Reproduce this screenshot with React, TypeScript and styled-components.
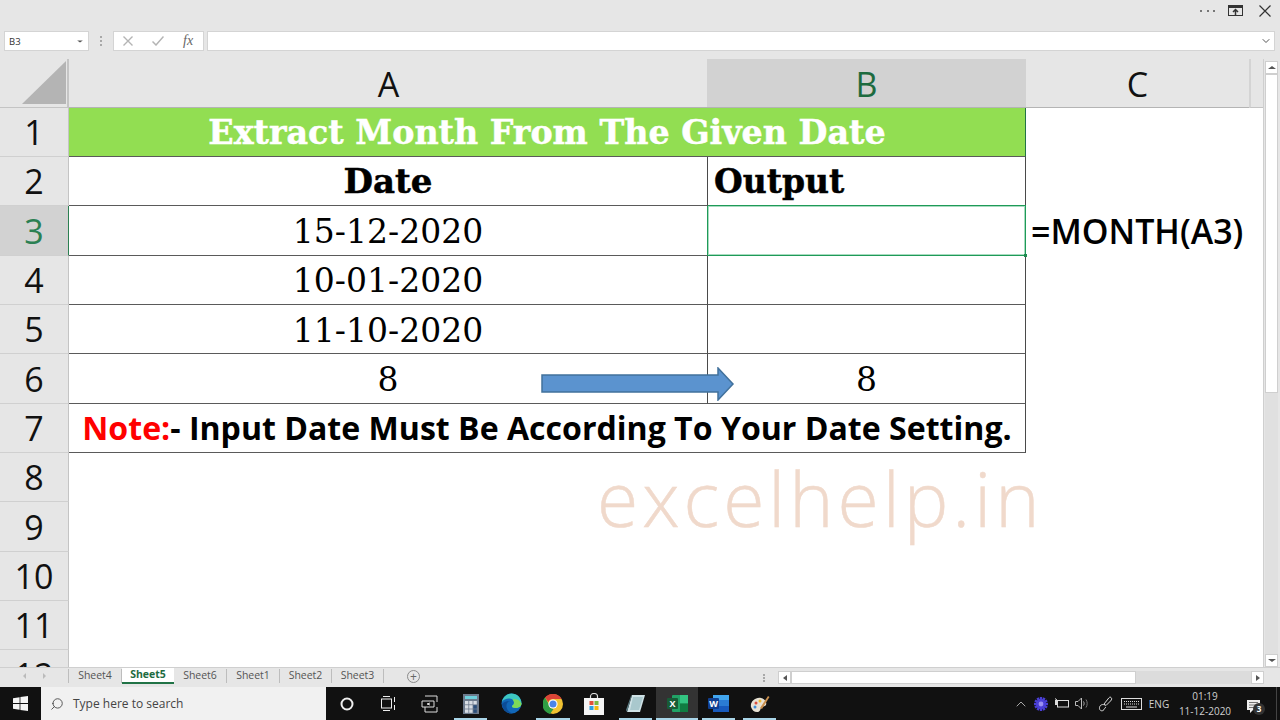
import React from "react";
import styled, { createGlobalStyle } from "styled-components";
import { ChevronDown, ChevronUp, Search } from "lucide-react";

const GlobalStyle = createGlobalStyle`
  html, body {
    margin: 0;
    padding: 0;
    background: #e6e6e6;
    overflow: hidden;
  }
  * { box-sizing: border-box; }
`;

const Page = styled.div`
  width: 1280px;
  height: 720px;
  display: flex;
  flex-direction: column;
  background: #e6e6e6;
  font-family: "Open Sans", "Noto Sans", sans-serif;
  color: #000;
`;

/* window controls */
const TitleBar = styled.div`
  height: 31px;
  padding: 5px 9px 0 0;
  display: flex;
  justify-content: flex-end;
  align-items: flex-start;
  gap: 16px;
  color: #333;
`;

const MoreDots = styled.div`
  width: 15px;
  height: 11px;
  margin-right: -3px;
  display: flex;
  align-items: center;
  justify-content: space-between;
  & > i {
    width: 2px;
    height: 2px;
    background: #777;
  }
`;

/* formula bar */
const FormulaRow = styled.div`
  height: 20px;
  margin: 0 5px 8px 4px;
  display: flex;
  align-items: stretch;
`;

const NameBox = styled.div`
  width: 85px;
  background: #fff;
  border: 1px solid #d4d4d4;
  padding: 0 4px;
  font-size: 9.5px;
  color: #333;
  display: flex;
  align-items: center;
  justify-content: space-between;
`;

const Grip = styled.div`
  width: 24px;
  display: flex;
  flex-direction: column;
  align-items: center;
  justify-content: center;
  gap: 2px;
  & > i {
    width: 2px;
    height: 2px;
    background: #a8a8a8;
  }
`;

const FxBox = styled.div`
  width: 91px;
  margin-right: 3px;
  background: #fff;
  border: 1px solid #d4d4d4;
  display: flex;
  align-items: center;
  padding-left: 9px;
  gap: 19px;
  color: #b4b4b4;
`;

const FxLabel = styled.span`
  font-family: "Liberation Serif", serif;
  font-style: italic;
  font-size: 14px;
  color: #666;
`;

const FormulaInput = styled.div`
  flex: 1;
  background: #fff;
  border: 1px solid #d4d4d4;
  display: flex;
  align-items: center;
  justify-content: flex-end;
  padding-right: 2px;
  color: #555;
`;

/* sheet */
const SheetArea = styled.div`
  position: relative;
  height: 608px;
  display: flex;
  overflow: hidden;
`;

const SheetGrid = styled.div`
  width: 1264px;
  border-right: 1px solid #cfcfcf;
  display: grid;
  grid-template-columns: 69px 639px 318px 223px 14px;
  grid-template-rows: 48.8px;
  grid-auto-rows: 49.33px;
  align-content: start;
`;

const Corner = styled.div`
  display: flex;
  align-items: flex-end;
  justify-content: flex-end;
  padding: 0 1px 3px 0;
  border-right: 2px solid #c4c4c4;
  border-bottom: 1px solid #c4c4c4;
`;

const ColHead = styled.div<{ $active?: boolean }>`
  display: flex;
  align-items: center;
  justify-content: center;
  padding-top: 2px;
  margin-left: ${(p) => (p.$active ? "-1px" : "0")};
  font-size: 34px;
  background: ${(p) => (p.$active ? "#d2d2d2" : "#e6e6e6")};
  color: ${(p) => (p.$active ? "#1d6b3f" : "#111")};
  border-bottom: 1px solid #b4b4b4;
`;

const ColEnd = styled.div`
  border-left: 2px solid #d4d4d4;
  border-bottom: 1px solid #c4c4c4;
`;

const RowHead = styled.div<{ $active?: boolean }>`
  display: flex;
  align-items: center;
  justify-content: center;
  font-size: 34px;
  background: ${(p) => (p.$active ? "#d2d2d2" : "#e6e6e6")};
  color: ${(p) => (p.$active ? "#2b8052" : "#111")};
  border-right: 1px solid ${(p) => (p.$active ? "#2b8052" : "#c4c4c4")};
  border-bottom: 1px solid #d0d0d0;
`;

const Cell = styled.div<{ $selected?: boolean }>`
  position: relative;
  display: flex;
  align-items: center;
  justify-content: center;
  padding-top: 2px;
  background: #fff;
  border-right: 1px solid #4a4a4a;
  border-bottom: 1px solid #5a5a5a;
  font-family: "DejaVu Serif", serif;
  font-size: 33px;
  white-space: nowrap;
  ${(p) =>
    p.$selected &&
    `
    z-index: 1;
    border-right-color: #1f9a58;
    border-bottom-color: #1f9a58;
    box-shadow: 0 -1px 0 #1f9a58, -1px 0 0 #1f9a58, inset 0 1px 0 #a8dcc0, inset 1px 0 0 #a8dcc0,
      inset 0 -1px 0 #a8dcc0, inset -1px 0 0 #a8dcc0;
    &::after {
      content: "";
      position: absolute;
      right: -2px;
      bottom: -2px;
      width: 3px;
      height: 3px;
      background: #1f8a50;
    }
  `}
`;

const TitleCell = styled(Cell)`
  grid-column: span 2;
  background: #92de52;
  color: #fff;
  font-weight: 700;
  font-size: 33.3px;
  -webkit-text-stroke: 0.5px #fff;
  border-right-color: #217346;
`;

const HeadCell = styled(Cell)<{ $left?: boolean }>`
  justify-content: ${(p) => (p.$left ? "flex-start" : "center")};
  padding: ${(p) => (p.$left ? "0 0 0 6px" : "0")};
  font-weight: 700;
  font-size: ${(p) => (p.$left ? "33px" : "34px")};
  -webkit-text-stroke: 0.5px #000;
`;

const NoteCell = styled(Cell)`
  grid-column: span 2;
  padding-top: 0;
  font-family: "Open Sans", "Noto Sans", sans-serif;
  font-weight: 700;
  font-size: 32.1px;
`;

const NoteRed = styled.span`
  color: #f00;
`;

const SideCell = styled.div`
  grid-column: span 2;
  display: flex;
  align-items: center;
  padding-left: 5px;
  background: #fff;
  font-size: 34px;
  font-weight: 600;
  white-space: nowrap;
`;

const BlankRow = styled.div<{ $span?: number }>`
  grid-column: span ${(p) => p.$span ?? 2};
  background: #fff;
`;

/* things lying over the grid */
const ArrowShape = styled.svg`
  position: absolute;
  z-index: 2;
  left: 541px;
  top: 308px;
`;

const Watermark = styled.div`
  position: absolute;
  z-index: 2;
  left: 597px;
  top: 402px;
  font-family: "Open Sans", sans-serif;
  font-weight: 300;
  font-size: 75px;
  line-height: 1;
  letter-spacing: 4px;
  color: #f0d9cb;
  -webkit-text-stroke: 0.5px #f0d9cb;
`;

/* scrollbars */
const VScroll = styled.div`
  position: absolute;
  left: 1265px;
  top: 2px;
  width: 13px;
  height: 606px;
  display: flex;
  flex-direction: column;
  background: #e0e0e0;
`;

const ScrollBtn = styled.div`
  flex: none;
  width: 13px;
  height: 13px;
  display: flex;
  align-items: center;
  justify-content: center;
  background: #fff;
  border: 1px solid #cfcfcf;
  color: #555;
`;

const VThumb = styled.div`
  height: 319px;
  background: #fff;
  border: 1px solid #cfcfcf;
`;

const VTrack = styled.div`
  flex: 1;
`;

/* tabs */
const TabBar = styled.div`
  height: 20px;
  display: flex;
  align-items: flex-start;
  border-top: 1px solid #cfcfcf;
  position: relative;
`;

const TabNav = styled.div`
  width: 69px;
  height: 14px;
  display: flex;
  align-items: center;
  justify-content: space-around;
  padding: 0 14px;
  border-right: 1px solid #bdbdbd;
  margin-top: 1px;
`;

const NavArrow = styled.i<{ $right?: boolean }>`
  width: 0;
  height: 0;
  border-top: 3px solid transparent;
  border-bottom: 3px solid transparent;
  ${(p) => (p.$right ? "border-left: 3px solid #bbb;" : "border-right: 3px solid #bbb;")}
`;

const Tab = styled.div<{ $active?: boolean; $w: number }>`
  width: ${(p) => p.$w}px;
  height: ${(p) => (p.$active ? "16px" : "14px")};
  margin-top: ${(p) => (p.$active ? "0" : "1px")};
  padding-bottom: 2px;
  display: flex;
  align-items: center;
  justify-content: center;
  font-size: 10.5px;
  font-weight: ${(p) => (p.$active ? 700 : 400)};
  color: ${(p) => (p.$active ? "#1d6b3f" : "#555")};
  background: ${(p) => (p.$active ? "#fff" : "transparent")};
  border-bottom: ${(p) => (p.$active ? "2px solid #217346" : "none")};
  border-right: ${(p) => (p.$active ? "none" : "1px solid #bdbdbd")};
`;

const AddSheet = styled.div`
  width: 13px;
  height: 13px;
  margin: 2px 0 0 23px;
  border: 1px solid #8a8a8a;
  border-radius: 50%;
  color: #666;
  display: flex;
  align-items: center;
  justify-content: center;
  font-size: 12px;
  line-height: 1;
`;

const HScroll = styled.div`
  position: absolute;
  left: 778px;
  top: 3px;
  width: 486px;
  height: 13px;
  display: flex;
  background: #dcdcdc;
`;

const HGrip = styled(Grip)`
  position: absolute;
  left: 752px;
  top: 3px;
  height: 13px;
  gap: 1px;
`;

const HThumb = styled.div`
  width: 345px;
  background: #fff;
  border: 1px solid #cfcfcf;
`;

const HTrack = styled.div`
  flex: 1;
`;

const TinyArrow = styled.i<{ $dir: "left" | "right" | "up" | "down"; $small?: boolean }>`
  width: 0;
  height: 0;
  ${(p) => p.$small && "transform: scale(.7);"}
  ${(p) =>
    p.$dir === "left"
      ? "border-top:3px solid transparent;border-bottom:3px solid transparent;border-right:4px solid #555;"
      : p.$dir === "right"
      ? "border-top:3px solid transparent;border-bottom:3px solid transparent;border-left:4px solid #555;"
      : p.$dir === "up"
      ? "border-left:4px solid transparent;border-right:4px solid transparent;border-bottom:3px solid #555;"
      : "border-left:4px solid transparent;border-right:4px solid transparent;border-top:3px solid #555;"}
`;

/* taskbar */
const Taskbar = styled.div`
  flex: 1;
  display: flex;
  align-items: stretch;
  background: #111;
  color: #eee;
  position: relative;
`;

const StartBtn = styled.div`
  width: 41px;
  display: flex;
  align-items: center;
  justify-content: center;
`;

const SearchBox = styled.div`
  width: 285px;
  background: #f1f1f1;
  color: #444;
  display: flex;
  align-items: center;
  gap: 9px;
  padding-left: 9px;
  font-size: 12px;
  & > svg {
    transform: scaleX(-1);
  }
`;

const TaskIcon = styled.div<{ $active?: boolean; $open?: boolean }>`
  width: 41.3px;
  display: flex;
  align-items: center;
  justify-content: center;
  position: relative;
  background: ${(p) => (p.$active ? "#333" : "transparent")};
  ${(p) =>
    p.$open &&
    `&::after {
      content: "";
      position: absolute;
      left: ${p.$active ? 0 : 4}px;
      right: ${p.$active ? 0 : 4}px;
      bottom: 0;
      height: 2px;
      background: #a9d5e8;
    }`}
`;

const Tray = styled.div`
  margin-left: auto;
  margin-right: 3px;
  display: flex;
  align-items: center;
  color: #cfcfcf;
`;

const TrayItem = styled.div<{ $w: number }>`
  width: ${(p) => p.$w}px;
  display: flex;
  align-items: center;
  justify-content: center;
`;

const Lang = styled.div`
  width: 30px;
  text-align: center;
  font-size: 10px;
`;

const Clock = styled.div`
  width: 62px;
  text-align: center;
  font-size: 10px;
  line-height: 15px;
`;

const Badge = styled.span`
  position: absolute;
  left: 7px;
  top: 16px;
  width: 12px;
  height: 12px;
  border-radius: 50%;
  background: #333;
  color: #fff;
  font-size: 8px;
  font-weight: 700;
  text-align: center;
  line-height: 12px;
`;

const NotifyBtn = styled.div`
  position: relative;
  width: 30px;
  align-self: stretch;
  margin-left: 10px;
  padding: 9px 0 0 1px;
`;

const EdgeBar = styled.div`
  width: 1px;
  align-self: stretch;
  background: #444;
`;

const CloseGlyph = ({ size, color, weight = 1.2 }: { size: number; color: string; weight?: number }) => (
  <svg width={size} height={size} viewBox={`0 0 ${size} ${size}`} stroke={color} strokeWidth={weight}>
    <path d={`M.5 .5 ${size - 0.5} ${size - 0.5}M${size - 0.5} .5 .5 ${size - 0.5}`} />
  </svg>
);

const CheckGlyph = () => (
  <svg width="12" height="10" viewBox="0 0 12 10" fill="none" stroke="#b4b4b4" strokeWidth="1.500">
    <path d="M.5 5.500 4 9 11.500 .5" />
  </svg>
);

const WindowsLogo = () => (
  <svg width="15" height="15" viewBox="0 0 15 15" fill="#f4f4f4">
    <path d="M0 2.200 6.600 1.200V7H0zM7.400 1.100 15 0V7H7.400zM0 7.900H6.600V13.800L0 12.800zM7.400 7.900H15V15L7.400 13.900z" />
  </svg>
);

const TaskView = () => (
  <svg width="16" height="15" viewBox="0 0 16 15" fill="none" stroke="#eee" strokeWidth="1">
    <path d="M3 .5H10M3 14.500H10" />
    <rect x="1.500" y="3" width="10" height="9" />
    <path d="M14.500 1V6M14.500 9V14" />
  </svg>
);

const FileNav = () => (
  <svg width="17" height="18" viewBox="0 0 17 18" fill="none" stroke="#ddd" strokeWidth="1">
    <path d="M4 1H16V7M1 6H13V12H1zM4 12V17H16V12M9 8 6 9l3 1" />
  </svg>
);

const CalcIcon = () => (
  <svg width="16" height="20" viewBox="0 0 16 20">
    <rect width="16" height="20" fill="#6d7a8c" />
    <rect x="2" y="2" width="12" height="3" fill="#6fd0dc" />
    {[0, 1, 2].map((r) =>
      [0, 1, 2].map((c) => (
        <rect key={`${r}-${c}`} x={2 + c * 4.2} y={7 + r * 4.2} width="3.4" height="3.4" fill={c === 2 && r > 0 ? "#2c4f7c" : "#d8dde4"} />
      ))
    )}
  </svg>
);

const EdgeIcon = () => (
  <svg width="21" height="21" viewBox="0 0 21 21">
    <circle cx="10.500" cy="10.500" r="10" fill="#1167b8" />
    <path d="M1 9C2 3 7 .5 10.500 .5 16 .5 20.500 4.500 20.500 10.500c0 3-3 4.500-6 4.500-2 0-4-1-3.500-2 1-1 2-1.500 2-3.500C13 7 11 5.500 8 5.500 5 5.500 2 7 1 9z" fill="#3dc7c0" />
    <path d="M20.500 10.500c0 3-3 4.500-6 4.500-2 0-4-1-3.500-2 1-1 2-1.500 2-3.500 0-1-.5-2-1.500-3 4-1 7 0 9 4z" fill="#7ed957" />
    <path d="M10 8c-3 0-5 2.500-4.500 6 .5 3 3 6 7 6.300-5 1-11.500-3-11.500-9.300C2 9 6 7.500 10 8z" fill="#0c4c96" />
  </svg>
);

const ChromeIcon = () => (
  <svg width="20" height="20" viewBox="0 0 20 20">
    <circle cx="10" cy="10" r="10" fill="#f1c232" />
    <path d="M10 0a10 10 0 0 1 8.660 5H10a5 5 0 0 0-4.700 3.300L2 3.600A10 10 0 0 1 10 0z" fill="#db4437" />
    <path d="M2 3.600 6 10.500a5 5 0 0 0 4.500 4.400L7 20A10 10 0 0 1 2 3.600z" fill="#2f9e44" />
    <circle cx="10" cy="10" r="4.600" fill="#fff" />
    <circle cx="10" cy="10" r="3.500" fill="#4a84e8" />
  </svg>
);

const StoreIcon = () => (
  <svg width="20" height="22" viewBox="0 0 20 22">
    <path d="M6.500 5V3.500a3.500 3 0 0 1 7 0V5" fill="none" stroke="#ddd" strokeWidth="1.200" />
    <rect y="5" width="20" height="17" fill="#f5f5f5" />
    <rect x="5.500" y="8" width="4" height="4" fill="#e2503a" />
    <rect x="10.500" y="8" width="4" height="4" fill="#7cb940" />
    <rect x="5.500" y="13" width="4" height="4" fill="#2da0e0" />
    <rect x="10.500" y="13" width="4" height="4" fill="#f5b90f" />
  </svg>
);

const NotepadIcon = () => (
  <svg width="20" height="19" viewBox="0 0 20 19">
    <path d="M6 1H19L14 18H1z" fill="#cfe2e6" />
    <path d="M6 1 1 18l-1-2 5-14z" fill="#5d7f86" />
    <path d="M7 3H17L13 16H4z" fill="#a9c8cd" />
  </svg>
);

const ExcelIcon = () => (
  <svg width="21" height="17" viewBox="0 0 21 17">
    <rect x="5" width="16" height="17" rx="1" fill="#21a366" />
    <rect x="13" width="8" height="8.500" fill="#33c481" />
    <rect x="13" y="8.500" width="8" height="8.500" fill="#107c41" />
    <rect y="3" width="11" height="11" rx="1" fill="#185c37" />
    <text x="5.500" y="12" textAnchor="middle" fontSize="9" fontWeight="700" fill="#fff" fontFamily="Open Sans">X</text>
  </svg>
);

const WordIcon = () => (
  <svg width="21" height="17" viewBox="0 0 21 17">
    <rect x="5" width="16" height="17" rx="1" fill="#2b7cd3" />
    <rect x="5" width="16" height="5" fill="#41a5ee" />
    <rect x="5" y="11" width="16" height="6" fill="#185abd" />
    <rect y="3" width="11" height="11" rx="1" fill="#103f91" />
    <text x="5.500" y="12" textAnchor="middle" fontSize="9" fontWeight="700" fill="#fff" fontFamily="Open Sans">W</text>
  </svg>
);

const PaintIcon = () => (
  <svg width="20" height="18" viewBox="0 0 20 18">
    <path d="M1 12C0 7 5 2 11 3c4 1 6 4 5 7-1 2-4 1-5 3s-1 4-4 4c-3 0-5-2-6-5z" fill="#e8e2d4" />
    <circle cx="6" cy="8" r="1.500" fill="#d9503f" />
    <circle cx="10" cy="6" r="1.500" fill="#f0bb32" />
    <circle cx="5" cy="12" r="1.500" fill="#3f8fd9" />
    <path d="M10 13 18 1l1.500 1L12 14z" fill="#c98f4d" />
  </svg>
);

const GearIcon = () => (
  <svg width="14" height="14" viewBox="0 0 14 14">
    {[0, 30, 60, 90, 120, 150].map((a) => (
      <rect key={a} x="5.800" y="0" width="2.400" height="14" fill="#4a3fd6" transform={`rotate(${a} 7 7)`} />
    ))}
    <circle cx="7" cy="7" r="5" fill="#4a3fd6" />
    <circle cx="7" cy="7" r="2.400" fill="#9a90f0" />
  </svg>
);

const BatteryIcon = () => (
  <svg width="15" height="11" viewBox="0 0 15 11" fill="none" stroke="#ddd">
    <rect x="3.500" y="2.500" width="11" height="6.500" />
    <rect x="1" y="2" width="3" height="5" fill="#ddd" stroke="none" />
    <path d="M1 .5 3 2" />
  </svg>
);

const VolumeIcon = () => (
  <svg width="14" height="13" viewBox="0 0 14 13" fill="none" stroke="#bbb">
    <path d="M.5 4.500H3L6.500 1V12L3 8.500H.5z" />
    <path d="M8.500 4.500c.8 1.300.8 2.700 0 4" />
    <path d="M11 2.500c1.600 2.500 1.600 5.500 0 8" stroke="#777" />
  </svg>
);

const PenIcon = () => (
  <svg width="15" height="16" viewBox="0 0 15 16" fill="none" stroke="#ddd">
    <path d="M13 1.500c1 1 1 2-.5 3.500L8 9.500 6 8l4-5c1-1.500 2-2.500 3-1.500z" />
    <path d="M7 9c-2-1-5-.5-5.500 2.500-.4 2.500 1.800 4 3.500 3 1.700-1 1.500-2.800 3-3.500" />
  </svg>
);

const KeyboardIcon = () => (
  <svg width="21" height="12" viewBox="0 0 21 12" fill="none" stroke="#ddd">
    <rect x=".5" y=".5" width="20" height="11" />
    <path d="M3 3.500H18M3 6H18" strokeDasharray="1 1" />
    <path d="M5 9H16" />
  </svg>
);

const NotifyIcon = () => (
  <svg width="13" height="13" viewBox="0 0 13 13">
    <path d="M0 0H13V10H6L3 13V10H0z" fill="#eee" />
    <path d="M2 2.500H11M2 5H11M2 7.500H8" stroke="#555" strokeWidth=".8" />
  </svg>
);

const rows = [
  { n: 3, a: "15-12-2020", b: "" },
  { n: 4, a: "10-01-2020", b: "" },
  { n: 5, a: "11-10-2020", b: "" },
  { n: 6, a: "8", b: "8" },
];

const sheets = [
  { name: "Sheet4", w: 53 },
  { name: "Sheet5", w: 52, active: true },
  { name: "Sheet6", w: 53 },
  { name: "Sheet1", w: 53 },
  { name: "Sheet2", w: 52 },
  { name: "Sheet3", w: 52 },
];

export default function App() {
  return (
    <Page>
      <GlobalStyle />
      <TitleBar>
        <MoreDots>
          <i />
          <i />
          <i />
        </MoreDots>
        <svg width="15" height="11" viewBox="0 0 15 11" fill="none" stroke="#333" strokeWidth="1">
          <rect x=".5" y=".5" width="14" height="10" />
          <path d="M1 2H14" strokeWidth="2" />
          <path d="M7.500 10V4.500M5 7 7.500 4.500 10 7" strokeWidth="1.500" />
        </svg>
        <CloseGlyph size={12} color="#333" />
      </TitleBar>

      <FormulaRow>
        <NameBox>
          B3
          <TinyArrow $dir="down" $small />
        </NameBox>
        <Grip>
          <i />
          <i />
          <i />
        </Grip>
        <FxBox>
          <CloseGlyph size={10} color="#b4b4b4" weight={1.4} />
          <CheckGlyph />
          <FxLabel>fx</FxLabel>
        </FxBox>
        <FormulaInput>
          <ChevronDown size={12} strokeWidth={2} />
        </FormulaInput>
      </FormulaRow>

      <SheetArea>
        <SheetGrid>
          <Corner>
            <svg width="44" height="43" viewBox="0 0 44 43">
              <path d="M44 0V43H0z" fill="#b4b4b4" />
            </svg>
          </Corner>
          <ColHead>A</ColHead>
          <ColHead $active>B</ColHead>
          <ColHead>C</ColHead>
          <ColEnd />

          <RowHead>1</RowHead>
          <TitleCell>Extract Month From The Given Date</TitleCell>
          <BlankRow />

          <RowHead>2</RowHead>
          <HeadCell>Date</HeadCell>
          <HeadCell $left>Output</HeadCell>
          <BlankRow />

          {rows.map((r) => (
            <React.Fragment key={r.n}>
              <RowHead $active={r.n === 3}>{r.n}</RowHead>
              <Cell>{r.a}</Cell>
              <Cell $selected={r.n === 3}>{r.b}</Cell>
              {r.n === 3 ? <SideCell>=MONTH(A3)</SideCell> : <BlankRow />}
            </React.Fragment>
          ))}

          <RowHead>7</RowHead>
          <NoteCell>
            <NoteRed>Note:</NoteRed>- Input Date Must Be According To Your Date Setting.
          </NoteCell>
          <BlankRow />

          {[8, 9, 10, 11, 12].map((n) => (
            <React.Fragment key={n}>
              <RowHead>{n}</RowHead>
              <BlankRow $span={4} />
            </React.Fragment>
          ))}
        </SheetGrid>

        <ArrowShape width="194" height="34" viewBox="0 0 194 34">
          <path d="M1 8H177V1L192 17 177 33V25H1z" fill="#5b93cf" stroke="#41719c" strokeWidth="1.500" />
        </ArrowShape>
        <Watermark>excelhelp.in</Watermark>

        <VScroll>
          <ScrollBtn>
            <TinyArrow $dir="up" />
          </ScrollBtn>
          <VThumb />
          <VTrack />
          <ScrollBtn>
            <TinyArrow $dir="down" />
          </ScrollBtn>
        </VScroll>
      </SheetArea>

      <TabBar>
        <TabNav>
          <NavArrow />
          <NavArrow $right />
        </TabNav>
        {sheets.map((s) => (
          <Tab key={s.name} $active={s.active} $w={s.w}>
            {s.name}
          </Tab>
        ))}
        <AddSheet>+</AddSheet>
        <HGrip>
          <i />
          <i />
          <i />
        </HGrip>
        <HScroll>
          <ScrollBtn>
            <TinyArrow $dir="left" />
          </ScrollBtn>
          <HThumb />
          <HTrack />
          <ScrollBtn>
            <TinyArrow $dir="right" />
          </ScrollBtn>
        </HScroll>
      </TabBar>

      <Taskbar>
        <StartBtn>
          <WindowsLogo />
        </StartBtn>
        <SearchBox>
          <Search size={14} strokeWidth={1.5} />
          Type here to search
        </SearchBox>
        <TaskIcon>
          <svg width="14" height="14" viewBox="0 0 14 14" fill="none" stroke="#eee" strokeWidth="2">
            <circle cx="7" cy="7" r="5.500" />
          </svg>
        </TaskIcon>
        <TaskIcon>
          <TaskView />
        </TaskIcon>
        <TaskIcon>
          <FileNav />
        </TaskIcon>
        <TaskIcon $open>
          <CalcIcon />
        </TaskIcon>
        <TaskIcon>
          <EdgeIcon />
        </TaskIcon>
        <TaskIcon $open>
          <ChromeIcon />
        </TaskIcon>
        <TaskIcon>
          <StoreIcon />
        </TaskIcon>
        <TaskIcon $open>
          <NotepadIcon />
        </TaskIcon>
        <TaskIcon $active $open>
          <ExcelIcon />
        </TaskIcon>
        <TaskIcon $open>
          <WordIcon />
        </TaskIcon>
        <TaskIcon $open>
          <PaintIcon />
        </TaskIcon>
        <Tray>
          <TrayItem $w={20}>
            <ChevronUp size={16} strokeWidth={1.2} />
          </TrayItem>
          <TrayItem $w={20}>
            <GearIcon />
          </TrayItem>
          <TrayItem $w={20}>
            <BatteryIcon />
          </TrayItem>
          <TrayItem $w={21}>
            <VolumeIcon />
          </TrayItem>
          <TrayItem $w={26}>
            <PenIcon />
          </TrayItem>
          <TrayItem $w={26}>
            <KeyboardIcon />
          </TrayItem>
          <Lang>ENG</Lang>
          <Clock>
            01:19
            <br />
            11-12-2020
          </Clock>
          <NotifyBtn>
            <NotifyIcon />
            <Badge>3</Badge>
          </NotifyBtn>
          <EdgeBar />
        </Tray>
      </Taskbar>
    </Page>
  );
}
